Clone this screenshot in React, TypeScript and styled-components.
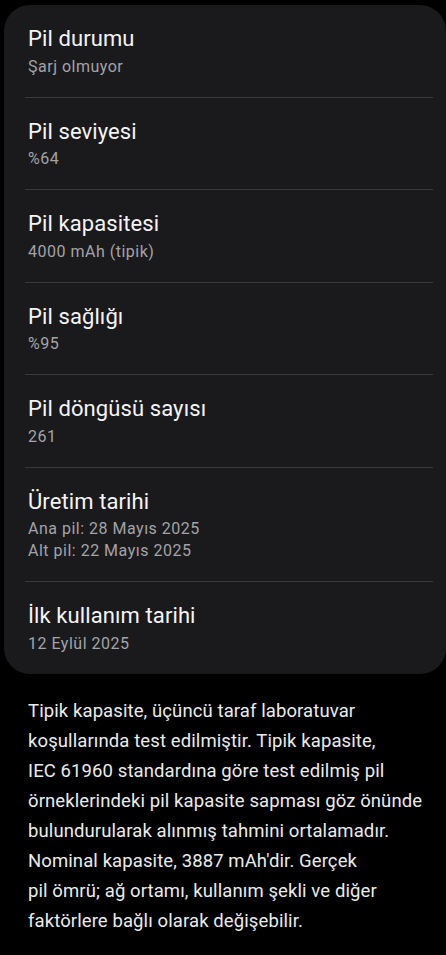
import { FC } from 'react';
import styled, { createGlobalStyle } from 'styled-components';

const GlobalStyle = createGlobalStyle`
  html, body {
    margin: 0;
    padding: 0;
    background: #000;
  }
  body {
    font-family: Roboto, "Noto Sans", sans-serif;
    -webkit-font-smoothing: antialiased;
  }
`;

const Page = styled.div`
  width: 446px;
  min-height: 955px;
  background: #000;
  padding-top: 5px;
  box-sizing: border-box;
`;

const Card = styled.div`
  margin-left: 4px;
  background: #1a1a1c;
  border-radius: 26px;
  padding: 0 13px 0 21px;
`;

const Row = styled.div`
  padding: 20px 0 19px 3px;
  display: flex;
  flex-direction: column;
  gap: 2.5px;

  & + & {
    border-top: 1px solid #38383b;
  }
`;

const Title = styled.div`
  font-size: 22px;
  line-height: 28px;
  letter-spacing: 0.1px;
  color: #f4f4f6;
`;

const Value = styled.div`
  font-size: 16px;
  line-height: 22px;
  letter-spacing: 0.5px;
  color: #a3a3a8;
`;

const Note = styled.p`
  margin: 22px 0 0;
  padding: 0 10px 0 28px;
  font-size: 18.5px;
  line-height: 30px;
  letter-spacing: 0.1px;
  color: #ebebeb;
  white-space: nowrap;
`;

type Item = { title: string; values: string[] };

const items: Item[] = [
  { title: 'Pil durumu', values: ['Şarj olmuyor'] },
  { title: 'Pil seviyesi', values: ['%64'] },
  { title: 'Pil kapasitesi', values: ['4000 mAh (tipik)'] },
  { title: 'Pil sağlığı', values: ['%95'] },
  { title: 'Pil döngüsü sayısı', values: ['261'] },
  { title: 'Üretim tarihi', values: ['Ana pil: 28 Mayıs 2025', 'Alt pil: 22 Mayıs 2025'] },
  { title: 'İlk kullanım tarihi', values: ['12 Eylül 2025'] },
];

const noteLines = [
  'Tipik kapasite, üçüncü taraf laboratuvar',
  'koşullarında test edilmiştir. Tipik kapasite,',
  'IEC 61960 standardına göre test edilmiş pil',
  'örneklerindeki pil kapasite sapması göz önünde',
  'bulundurularak alınmış tahmini ortalamadır.',
  "Nominal kapasite, 3887 mAh'dir. Gerçek",
  'pil ömrü; ağ ortamı, kullanım şekli ve diğer',
  'faktörlere bağlı olarak değişebilir.',
];

const App: FC = () => (
  <Page>
    <GlobalStyle />
    <Card>
      {items.map((item) => (
        <Row key={item.title}>
          <Title>{item.title}</Title>
          <div>
            {item.values.map((v) => (
              <Value key={v}>{v}</Value>
            ))}
          </div>
        </Row>
      ))}
    </Card>
    <Note>
      {noteLines.map((line, i) => (
        <span key={i}>
          {line}
          {i < noteLines.length - 1 && <br />}
        </span>
      ))}
    </Note>
  </Page>
);

export default App;
